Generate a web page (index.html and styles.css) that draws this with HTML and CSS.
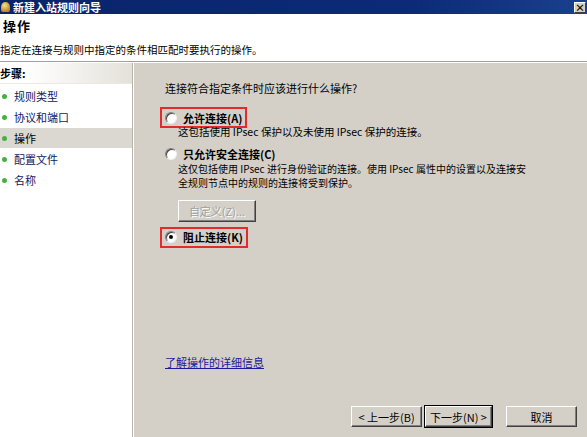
FILE: index.html
```html
<!DOCTYPE html>
<html lang="zh-CN">
<head>
<meta charset="UTF-8">
<title>新建入站规则向导</title>
<link rel="stylesheet" href="styles.css">
</head>
<body>
<div class="titlebar">
    <span class="app-icon"></span>
    <span class="title-text">新建入站规则向导</span>
    <span class="close-btn">×</span>
</div>

<div class="header">
    <h1>操作</h1>
    <p>指定在连接与规则中指定的条件相匹配时要执行的操作。</p>
</div>

<div class="main">
    <div class="steps">
        <div class="steps-title">步骤:</div>
        <div class="step"><span class="dot"></span>规则类型</div>
        <div class="step"><span class="dot"></span>协议和端口</div>
        <div class="step current"><span class="dot"></span>操作</div>
        <div class="step"><span class="dot"></span>配置文件</div>
        <div class="step"><span class="dot"></span>名称</div>
    </div>

    <div class="content">
        <div class="question">连接符合指定条件时应该进行什么操作?</div>

        <div class="option">
            <label class="choice marked"><span class="radio"></span><b>允许连接(A)</b></label>
            <div class="desc">这包括使用 IPsec 保护以及未使用 IPsec 保护的连接。</div>
        </div>

        <div class="option">
            <label class="choice plain"><span class="radio"></span><b>只允许安全连接(C)</b></label>
            <div class="desc tight">这仅包括使用 IPsec 进行身份验证的连接。使用 IPsec 属性中的设置以及连接安<br>全规则节点中的规则的连接将受到保护。</div>
            <button class="btn disabled custom">自定义(Z)...</button>
        </div>

        <div class="option">
            <label class="choice marked"><span class="radio checked"></span><b>阻止连接(K)</b></label>
        </div>

        <div class="spacer"></div>

        <a class="learn" href="#">了解操作的详细信息</a>

        <div class="buttons">
            <button class="btn">&lt; 上一步(B)</button>
            <button class="btn default">下一步(N) &gt;</button>
            <button class="btn cancel">取消</button>
        </div>
    </div>
</div>
</body>
</html>
```

FILE: styles.css
```css
body {
  margin: 0;
  width: 587px;
  height: 437px;
  overflow: hidden;
  font-family: "Noto Sans CJK SC", "DejaVu Sans", sans-serif;
  font-size: 11px;
  color: #000;
  background: #d4d0c8;
  display: flex;
  flex-direction: column;
}
.titlebar {
  height: 14px;
  background: linear-gradient(to right, #0a246a, #0c2a78 70%, #1b3f8e);
  color: #fff;
  display: flex;
  align-items: center;
  font-weight: bold;
  font-size: 11px;
  line-height: 14px;
}
.app-icon {
  width: 9px;
  height: 10px;
  margin: 0 3px 0 1px;
  border-radius: 50% 50% 2px 2px;
  background: radial-gradient(circle at 40% 35%, #f4e28a, #c08a1e 70%);
}
.title-text {
  flex: 1;
}
.close-btn {
  width: 12px;
  height: 11px;
  margin-right: 1px;
  background: #d4d0c8;
  color: #000;
  font-size: 10px;
  line-height: 10px;
  text-align: center;
  border: 1px solid;
  border-color: #fff #404040 #404040 #fff;
  box-sizing: border-box;
}
.header {
  background: #fff;
  height: 47px;
  border-bottom: 1px solid #a0a0a0;
  box-shadow: 0 1px 0 #fff;
  padding-left: 3px;
}
.header h1 {
  margin: 4px 0 0;
  font-size: 13px;
  line-height: 16px;
  font-weight: bold;
  letter-spacing: 1px;
}
.header p {
  margin: 9px 0 0 -3px;
  font-size: 10.5px;
  line-height: 14px;
}
.main {
  flex: 1;
  display: flex;
  margin-top: 1px;
}
.steps {
  width: 132px;
  background: #fff;
  border-right: 1px solid #b8b4ac;
  box-shadow: 1px 0 0 #fff;
}
.steps-title {
  height: 20px;
  line-height: 20px;
  font-weight: bold;
  background: linear-gradient(to right, #fff 20%, #e4e1da);
  border-bottom: 1px solid #ece9e2;
  margin-bottom: 2px;
}
.step {
  height: 20px;
  line-height: 20px;
  margin-bottom: 1px;
  color: #102060;
  display: flex;
  align-items: center;
}
.step.current {
  background: #dbd8d1;
  color: #000;
}
.dot {
  width: 5px;
  height: 5px;
  border-radius: 50%;
  background: #48b040;
  margin: 0 7px 0 2px;
}
.content {
  flex: 1;
  margin-left: 2px;
  padding: 18px 10px 10px 30px;
  display: flex;
  flex-direction: column;
}
.question {
  line-height: 14px;
  margin-bottom: 12px;
}
.option {
  margin-bottom: 5px;
}
.choice {
  display: inline-flex;
  align-items: center;
  height: 17px;
  padding: 0 3px 0 3px;
  margin-left: -5px;
  border: 2px solid transparent;
}
.choice.marked {
  border-color: #e02c2c;
}
.choice.plain {
  border-bottom-width: 0;
}
.choice b {
  font-size: 11px;
}
.radio {
  width: 10px;
  height: 10px;
  border-radius: 50%;
  background: #fff;
  border: 1px solid;
  border-color: #808080 #f0f0f0 #f0f0f0 #808080;
  box-shadow: inset 1px 1px 0 #404040;
  margin-right: 6px;
  position: relative;
}
.radio.checked::after {
  content: "";
  position: absolute;
  left: 3px;
  top: 3px;
  width: 4px;
  height: 4px;
  border-radius: 50%;
  background: #000;
}
.desc {
  margin: -3px 0 0 13px;
  line-height: 13px;
  font-size: 10.5px;
}
.desc.tight {
  margin-top: -1px;
  line-height: 14px;
  font-size: 10px;
}
.btn {
  font-family: inherit;
  font-size: 11px;
  background: #d4d0c8;
  border: 1px solid;
  border-color: #fff #404040 #404040 #fff;
  box-shadow: inset -1px -1px 0 #808080;
  height: 21px;
  padding: 0;
}
.btn.disabled {
  color: #a0a0a0;
  text-shadow: 1px 1px 0 #fff;
}
.custom {
  display: block;
  width: 78px;
  height: 22px;
  margin: 10px 0 0 13px;
}
.spacer {
  flex: 1;
}
.learn {
  color: #1a1a9c;
  text-decoration: underline;
  align-self: flex-start;
  margin-bottom: 36px;
}
.buttons {
  display: flex;
  justify-content: flex-end;
  gap: 3px;
}
.buttons .btn {
  width: 71px;
}
.buttons .default {
  width: 67px;
  outline: 1px solid #000;
}
.buttons .cancel {
  margin-left: 11px;
  width: 71px;
}
```
